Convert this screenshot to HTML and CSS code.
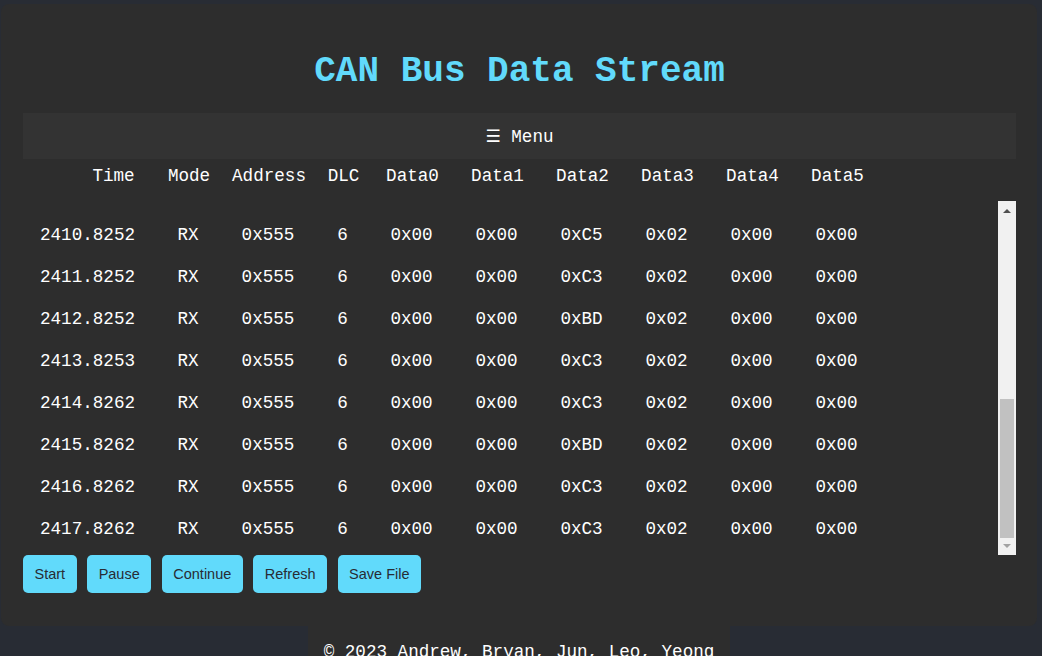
FILE: index.html
```html
<!DOCTYPE html>
<html lang="en">
<head>
<meta charset="utf-8">
<title>CAN Bus Data Stream</title>
<link rel="stylesheet" href="styles.css">
</head>
<body>
<div class="page">
  <main class="panel">
    <h1 class="title">CAN Bus Data Stream</h1>
    <nav class="menu"><span class="menu-icon">☰</span> Menu</nav>
    <table class="grid head">
      <thead>
        <tr><th class="c-time">Time</th><th>Mode</th><th>Address</th><th>DLC</th><th>Data0</th><th>Data1</th><th>Data2</th><th>Data3</th><th>Data4</th><th>Data5</th></tr>
      </thead>
    </table>
    <div class="scroll">
      <div class="viewport">
        <table class="grid body">
          <tbody>
            <tr><td class="c-time">2399.8251</td><td>RX</td><td>0x555</td><td>6</td><td>0x00</td><td>0x00</td><td>0xC3</td><td>0x02</td><td>0x00</td><td>0x00</td></tr>
            <tr><td class="c-time">2400.8251</td><td>RX</td><td>0x555</td><td>6</td><td>0x00</td><td>0x00</td><td>0xBD</td><td>0x02</td><td>0x00</td><td>0x00</td></tr>
            <tr><td class="c-time">2401.8251</td><td>RX</td><td>0x555</td><td>6</td><td>0x00</td><td>0x00</td><td>0xC3</td><td>0x02</td><td>0x00</td><td>0x00</td></tr>
            <tr><td class="c-time">2402.8251</td><td>RX</td><td>0x555</td><td>6</td><td>0x00</td><td>0x00</td><td>0xC5</td><td>0x02</td><td>0x00</td><td>0x00</td></tr>
            <tr><td class="c-time">2403.8252</td><td>RX</td><td>0x555</td><td>6</td><td>0x00</td><td>0x00</td><td>0xC3</td><td>0x02</td><td>0x00</td><td>0x00</td></tr>
            <tr><td class="c-time">2404.8252</td><td>RX</td><td>0x555</td><td>6</td><td>0x00</td><td>0x00</td><td>0xBD</td><td>0x02</td><td>0x00</td><td>0x00</td></tr>
            <tr><td class="c-time">2405.8252</td><td>RX</td><td>0x555</td><td>6</td><td>0x00</td><td>0x00</td><td>0xC3</td><td>0x02</td><td>0x00</td><td>0x00</td></tr>
            <tr><td class="c-time">2406.8252</td><td>RX</td><td>0x555</td><td>6</td><td>0x00</td><td>0x00</td><td>0xC3</td><td>0x02</td><td>0x00</td><td>0x00</td></tr>
            <tr><td class="c-time">2407.8252</td><td>RX</td><td>0x555</td><td>6</td><td>0x00</td><td>0x00</td><td>0xBD</td><td>0x02</td><td>0x00</td><td>0x00</td></tr>
            <tr><td class="c-time">2408.8252</td><td>RX</td><td>0x555</td><td>6</td><td>0x00</td><td>0x00</td><td>0xC3</td><td>0x02</td><td>0x00</td><td>0x00</td></tr>
            <tr><td class="c-time">2409.8252</td><td>RX</td><td>0x555</td><td>6</td><td>0x00</td><td>0x00</td><td>0xC3</td><td>0x02</td><td>0x00</td><td>0x00</td></tr>
            <tr><td class="c-time">2410.8252</td><td>RX</td><td>0x555</td><td>6</td><td>0x00</td><td>0x00</td><td>0xC5</td><td>0x02</td><td>0x00</td><td>0x00</td></tr>
            <tr><td class="c-time">2411.8252</td><td>RX</td><td>0x555</td><td>6</td><td>0x00</td><td>0x00</td><td>0xC3</td><td>0x02</td><td>0x00</td><td>0x00</td></tr>
            <tr><td class="c-time">2412.8252</td><td>RX</td><td>0x555</td><td>6</td><td>0x00</td><td>0x00</td><td>0xBD</td><td>0x02</td><td>0x00</td><td>0x00</td></tr>
            <tr><td class="c-time">2413.8253</td><td>RX</td><td>0x555</td><td>6</td><td>0x00</td><td>0x00</td><td>0xC3</td><td>0x02</td><td>0x00</td><td>0x00</td></tr>
            <tr><td class="c-time">2414.8262</td><td>RX</td><td>0x555</td><td>6</td><td>0x00</td><td>0x00</td><td>0xC3</td><td>0x02</td><td>0x00</td><td>0x00</td></tr>
            <tr><td class="c-time">2415.8262</td><td>RX</td><td>0x555</td><td>6</td><td>0x00</td><td>0x00</td><td>0xBD</td><td>0x02</td><td>0x00</td><td>0x00</td></tr>
            <tr><td class="c-time">2416.8262</td><td>RX</td><td>0x555</td><td>6</td><td>0x00</td><td>0x00</td><td>0xC3</td><td>0x02</td><td>0x00</td><td>0x00</td></tr>
            <tr><td class="c-time">2417.8262</td><td>RX</td><td>0x555</td><td>6</td><td>0x00</td><td>0x00</td><td>0xC3</td><td>0x02</td><td>0x00</td><td>0x00</td></tr>
          </tbody>
        </table>
      </div>
      <div class="scrollbar" aria-hidden="true">
        <div class="sb-btn sb-up"><span class="tri tri-up"></span></div>
        <div class="sb-track"><div class="sb-thumb"></div></div>
        <div class="sb-btn sb-down"><span class="tri tri-down"></span></div>
      </div>
    </div>
    <div class="actions">
      <button class="btn">Start</button>
      <button class="btn">Pause</button>
      <button class="btn">Continue</button>
      <button class="btn">Refresh</button>
      <button class="btn">Save File</button>
    </div>
  </main>
  <footer class="footer">© 2023 Andrew, Bryan, Jun, Leo, Yeong</footer>
</div>
</body>
</html>
```
FILE: styles.css
```css
html, body {
  margin: 0;
  padding: 0;
  background: #282c34;
  overflow: hidden;
}

.page {
  padding: 4px 5px 0 1px;
  display: flex;
  flex-direction: column;
  align-items: center;
  font-family: "Courier New", "Liberation Mono", monospace;
  font-size: 17.6px;
  color: #ffffff;
}

.panel {
  box-sizing: border-box;
  width: 100%;
  background: #2d2d2d;
  border-radius: 8px;
  padding: 43px 21px 33px 22px;
  display: flex;
  flex-direction: column;
}

.title {
  margin: 0 0 17px 0;
  text-align: center;
  font-family: "Courier New", "Liberation Mono", monospace;
  font-weight: bold;
  font-size: 36px;
  line-height: 49px;
  color: #61dafb;
}

.menu {
  background: #333333;
  height: 46px;
  line-height: 46px;
  text-align: center;
  font-size: 17.6px;
  color: #ffffff;
}

.menu-icon {
  font-family: "DejaVu Sans", sans-serif;
  font-size: 17px;
}

.grid {
  align-self: flex-start;
  flex: none;
  border-collapse: collapse;
  border-spacing: 0;
  table-layout: fixed;
  font-size: 17.6px;
  line-height: 20px;
}

.grid th,
.grid td {
  padding: 0;
  text-align: center;
  font-weight: normal;
  white-space: nowrap;
  width: 85px;
}

.grid th:nth-child(2), .grid td:nth-child(2) { width: 64px; }
.grid th:nth-child(3), .grid td:nth-child(3) { width: 96px; }
.grid th:nth-child(4), .grid td:nth-child(4) { width: 53px; }

.head {
  width: 810px;
  margin: 7px 0 0 47px;
}

.head th {
  height: 20px;
}

.head .c-time { width: 87px; }

.scroll {
  margin-top: 15px;
  height: 354px;
  display: flex;
}

.viewport {
  flex: 1;
  overflow: hidden;
  display: flex;
  flex-direction: column-reverse;
  align-items: flex-start;
}

.body {
  width: 860px;
  margin: 0 0 5px -4px;
}

.body td {
  height: 42px;
}

.body .c-time { width: 137px; }

.scrollbar {
  flex: none;
  width: 18px;
  background: #f1f1f1;
  display: flex;
  flex-direction: column;
}

.sb-btn {
  height: 17px;
  display: flex;
  align-items: center;
  justify-content: center;
}

.tri {
  width: 0;
  height: 0;
  border-left: 4px solid transparent;
  border-right: 4px solid transparent;
}

.tri-up {
  border-bottom: 4px solid #505050;
  margin-top: 2px;
}

.tri-down {
  border-top: 4px solid #a3a3a3;
  margin-bottom: 1px;
}

.sb-track {
  flex: 1;
  display: flex;
  flex-direction: column;
  justify-content: flex-end;
  padding: 0 2px;
}

.sb-thumb {
  height: 139px;
  background: #c1c1c1;
}

.actions {
  display: flex;
  gap: 10.5px;
  margin-top: 0;
}

.btn {
  font-family: "Liberation Sans", Arial, sans-serif;
  font-size: 14.5px;
  line-height: 18px;
  padding: 10px 11.5px;
  background: #61dafb;
  color: #282c34;
  border: none;
  border-radius: 5px;
}

.footer {
  background: #2d2d2d;
  padding: 16px;
  line-height: 20px;
  font-size: 17.6px;
  white-space: nowrap;
}
```
